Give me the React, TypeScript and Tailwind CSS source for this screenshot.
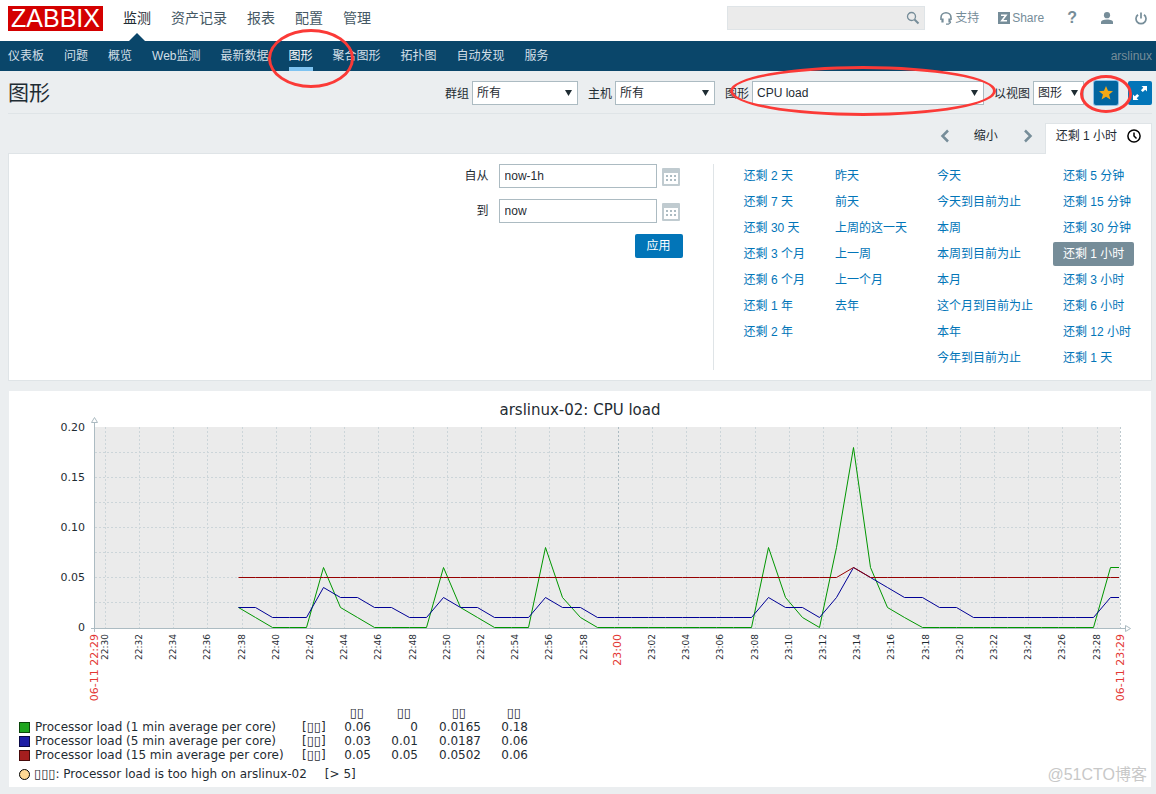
import React from 'react'

const mainMenu = ['监测', '资产记录', '报表', '配置', '管理']

const subMenu = [
  '仪表板',
  '问题',
  '概览',
  'Web监测',
  '最新数据',
  '图形',
  '聚合图形',
  '拓扑图',
  '自动发现',
  '服务'
]

const timeRanges = [
  ['还剩 2 天', '还剩 7 天', '还剩 30 天', '还剩 3 个月', '还剩 6 个月', '还剩 1 年', '还剩 2 年'],
  ['昨天', '前天', '上周的这一天', '上一周', '上一个月', '去年'],
  ['今天', '今天到目前为止', '本周', '本周到目前为止', '本月', '这个月到目前为止', '本年', '今年到目前为止'],
  ['还剩 5 分钟', '还剩 15 分钟', '还剩 30 分钟', '还剩 1 小时', '还剩 3 小时', '还剩 6 小时', '还剩 12 小时', '还剩 1 天']
]

// Load in hundredths, one sample a minute starting at 22:37:50
const load1 = [
  2, 1, 0, 0, 0, 6, 2, 1, 0, 0, 0, 0, 6, 2, 1, 0, 0, 0, 8, 3, 1, 0, 0, 0, 0, 0, 0, 0, 0, 0, 0, 8, 3, 1, 0, 8, 18, 6,
  2, 1, 0, 0, 0, 0, 0, 0, 0, 0, 0, 0, 0, 6
]
const load5 = [
  2, 2, 1, 1, 1, 4, 3, 3, 2, 2, 1, 1, 3, 2, 2, 1, 1, 1, 3, 2, 2, 1, 1, 1, 1, 1, 1, 1, 1, 1, 1, 3, 2, 2, 1, 3, 6, 5,
  4, 3, 3, 2, 2, 1, 1, 1, 1, 1, 1, 1, 1, 3
]
const load15 = load5.map((_, i) => (i === 36 ? 6 : 5))

const series = [
  { name: 'Processor load (1 min average per core)', line: '#009600', box: 'bg-[#1ea51e] border-[#0a460a]', data: load1, stats: ['0.06', '0', '0.0165', '0.18'] },
  { name: 'Processor load (5 min average per core)', line: '#000096', box: 'bg-[#1e1ea5] border-[#0a0a46]', data: load5, stats: ['0.03', '0.01', '0.0187', '0.06'] },
  { name: 'Processor load (15 min average per core)', line: '#960000', box: 'bg-[#a51e1e] border-[#460a0a]', data: load15, stats: ['0.05', '0.05', '0.0502', '0.06'] }
]

const plot = { left: 86, right: 1111, top: 36, bottom: 237 }

function linePoints(data: number[]): string {
  const points = data.map((v, i) => [Math.floor(230 + i * 17.1) - 0.5, 236.5 - v * 10])
  points.push([1110, 236.5 - data[data.length - 1] * 10])
  return points.map((p) => p.join(',')).join(' ')
}

function tickLabel(i: number): string {
  const minutes = 30 + i * 2
  return `${minutes >= 60 ? 23 : 22}:${String(minutes % 60).padStart(2, '0')}`
}

function Ring({ className }: { className: string }): React.JSX.Element {
  return (
    <span
      aria-hidden="true"
      className={`pointer-events-none absolute z-10 rounded-[50%] border-3 border-[#fb3a37] ${className}`}
    />
  )
}

interface FilterSelectProps {
  id: string
  label: string
  value: string
  className: string
  children?: React.ReactNode
}

function FilterSelect({ id, label, value, className, children }: FilterSelectProps): React.JSX.Element {
  return (
    <div className="relative flex items-center gap-[3px]">
      <label htmlFor={id} className="pt-[2px]">
        {label}
      </label>
      <div className="relative">
        <select
          id={id}
          className={`block h-6 appearance-none border border-[#acbbc2] bg-white pl-1 text-xs text-[#1f2c33] ${className}`}
        >
          <option>{value}</option>
        </select>
        <svg className="pointer-events-none absolute right-[6px] top-[9px]" width="7" height="6" viewBox="0 0 7 6">
          <path d="M0 0h7L3.5 6z" fill="#1f2c33" />
        </svg>
      </div>
      {children}
    </div>
  )
}

function CalendarIcon(): React.JSX.Element {
  return (
    <svg width="18" height="18" viewBox="0 0 18 18">
      <rect width="18" height="18" rx="1" fill="#c0cbd0" />
      <rect x="2" y="5" width="14" height="11" fill="#fff" />
      {[4, 8, 12].map((x) =>
        [7, 11].map((y) => <rect key={`${x}-${y}`} x={x} y={y} width="2" height="2" fill="#acbbc2" />)
      )}
    </svg>
  )
}

function TimeField({ id, label, value }: { id: string; label: string; value: string }): React.JSX.Element {
  return (
    <div className="flex items-center">
      <label htmlFor={id} className="mr-[10px]">
        {label}
      </label>
      <input id={id} defaultValue={value} className="h-6 w-[158px] border border-[#acbbc2] bg-white px-[5px] text-xs" />
      <button type="button" aria-label={`${label} 日历`} className="flex w-[26px] pl-[5px] pt-[2px]">
        <CalendarIcon />
      </button>
    </div>
  )
}

function LoadChart(): React.JSX.Element {
  return (
    <svg viewBox="0 0 1142 315" className="block h-auto w-full font-['DejaVu_Sans',sans-serif]" fill="#1f2c33">
      <text x="571" y="24" fontSize="15" textAnchor="middle">
        arslinux-02: CPU load
      </text>
      <rect x={plot.left} y={plot.top} width={plot.right - plot.left} height={plot.bottom - plot.top} fill="#ebebeb" />

      <g stroke="#ccd5d9" strokeDasharray="2 2" shapeRendering="crispEdges">
        {[1, 2, 3, 4, 5, 6, 7].map((i) => (
          <line key={i} x1={plot.left} x2={plot.right} y1={236.5 - i * 25} y2={236.5 - i * 25} />
        ))}
        {Array.from({ length: 30 }, (_, i) => {
          const x = Math.floor(96.3 + i * 34.2) + 0.5
          return (
            <line key={i} x1={x} x2={x} y1={plot.top} y2={plot.bottom} stroke={i === 15 ? '#acbbc2' : undefined} />
          )
        })}
        <line x1="1111.5" x2="1111.5" y1={plot.top} y2={plot.bottom} stroke="#bfcacf" />
      </g>

      <g fill="none" stroke="#acbbc2" shapeRendering="crispEdges">
        <path d="M85.5 32v209M82 237.5h1034" />
        <path d="M82.5 31.5h6l-3-5z" fill="#fff" shapeRendering="auto" />
        <path d="M1116.5 234.5v6l5-3z" fill="#fff" shapeRendering="auto" />
      </g>

      {['0', '0.05', '0.10', '0.15', '0.20'].map((label, i) => (
        <text key={label} x="76" y={240 - i * 50} fontSize="11" textAnchor="end">
          {label}
        </text>
      ))}

      {Array.from({ length: 30 }, (_, i) => {
        const hour = i === 15
        return (
          <text
            key={i}
            transform={`translate(${Math.floor(96.3 + i * 34.2) + 3} 243) rotate(-90)`}
            fontSize={hour ? 11 : 9}
            fill={hour ? '#e33734' : undefined}
            textAnchor="end"
          >
            {tickLabel(i)}
          </text>
        )
      })}
      <g fill="#e33734" fontSize="11" textAnchor="end">
        <text transform="translate(89 243) rotate(-90)">06-11 22:29</text>
        <text transform="translate(1115 243) rotate(-90)">06-11 23:29</text>
      </g>

      {series.map((s) => (
        <polyline key={s.name} points={linePoints(s.data)} fill="none" stroke={s.line} />
      ))}
    </svg>
  )
}

function Legend(): React.JSX.Element {
  return (
    <div className="px-[10px] pb-[6px] font-['DejaVu_Sans',sans-serif] text-xs leading-[14px]">
      <table className="table-fixed border-collapse text-right">
        <colgroup>
          <col className="w-4" />
          <col className="w-[267px]" />
          <col className="w-[30px]" />
          <col className="w-[39px]" />
          <col className="w-[47px]" />
          <col className="w-[63px]" />
          <col className="w-[47px]" />
        </colgroup>
        <thead>
          <tr className="text-[13px] leading-[14px]">
            <td colSpan={3} />
            {series[0].stats.map((_, i) => (
              <th key={i} className={`p-0 font-normal ${i === 2 ? 'pr-[15px]' : 'pr-[7px]'}`}>
                ▯▯
              </th>
            ))}
          </tr>
        </thead>
        <tbody>
          {series.map((s) => (
            <tr key={s.name}>
              <td className="p-0">
                <span className={`block size-[11px] border ${s.box}`} />
              </td>
              <td className="whitespace-nowrap p-0 text-left">{s.name}</td>
              <td className="p-0 text-left">
                [<span className="text-[13px] leading-3">▯▯</span>]
              </td>
              {s.stats.map((v, i) => (
                <td key={i} className="p-0">
                  {v}
                </td>
              ))}
            </tr>
          ))}
        </tbody>
      </table>
      <div className="mt-[5px] flex items-center">
        <span className="mr-1 size-[11px] rounded-full border border-black bg-[#ffd995]" />
        <span>
          <span className="text-[13px] leading-3">▯▯▯</span>: Processor load is too high on arslinux-02
        </span>
        <span className="ml-[18px]">[&gt; 5]</span>
      </div>
    </div>
  )
}

function Header(): React.JSX.Element {
  return (
    <header>
      <div className="flex h-[41px] items-start bg-white px-2 pt-[6px]">
        <a
          href="#"
          className="mr-5 flex h-[25px] w-[95px] items-center justify-center bg-[#d40000] text-[25px] leading-none text-white"
        >
          ZABBIX
        </a>
        <nav className="flex gap-5 text-sm leading-6 text-[#455864]">
          {mainMenu.map((item, i) => (
            <a key={item} href="#" className={i === 0 ? 'relative h-[35px] text-[#1f2c33]' : ''}>
              {item}
              {i === 0 && (
                <svg className="absolute bottom-0 left-[6px]" width="16" height="8" viewBox="0 0 16 8">
                  <path d="M0 8 8 0l8 8z" fill="#0a466a" />
                </svg>
              )}
            </a>
          ))}
        </nav>
        <div className="ml-auto flex h-6 items-center text-xs text-[#768d99]">
          <div className="relative mr-[15px]">
            <input aria-label="搜索" className="block h-6 w-[198px] border border-[#dfe4e7] bg-[#ebebeb] px-1" />
            <svg className="absolute right-[5px] top-[5px]" width="14" height="14" viewBox="0 0 14 14" fill="none" stroke="#768d99">
              <circle cx="5.5" cy="5.5" r="4" strokeWidth="1.3" />
              <path d="m8.5 8.5 4 4" strokeWidth="2" />
            </svg>
          </div>
          <a href="#" className="mr-[19px] flex items-center gap-[3px]">
            <svg width="12" height="13" viewBox="0 0 12 13" fill="none" stroke="#768d99" strokeWidth="1.6">
              <path d="M1 8V5.500a5 4.700 0 0 1 10 0V8" />
              <path d="M2.500 6.500v4M9.500 6.500v4" strokeWidth="2.200" />
              <path d="M10.500 9.500v1L8.500 12.200H6" strokeWidth="1.200" />
            </svg>
            支持
          </a>
          <a href="#" className="mr-[23px] flex items-center gap-[2px]">
            <svg width="12" height="12" viewBox="0 0 12 12">
              <rect width="12" height="12" fill="#768d99" />
              <path d="M3 3.200h5L3.800 8.800H9" fill="none" stroke="#fff" strokeWidth="1.600" />
            </svg>
            Share
          </a>
          <a href="#" className="mr-6 text-base font-bold">
            ?
          </a>
          <a href="#" aria-label="用户" className="mr-[22px]">
            <svg width="12" height="12" viewBox="0 0 12 12" fill="#768d99">
              <circle cx="6" cy="3.200" r="3.100" />
              <path d="M0 12v-2c0-1.500 2.500-2.500 6-2.500s6 1 6 2.500v2z" />
            </svg>
          </a>
          <a href="#" aria-label="退出" className="mr-px">
            <svg width="12" height="13" viewBox="0 0 12 13" fill="none" stroke="#768d99" strokeWidth="1.700">
              <path d="M3 2.700a5 5 0 1 0 6 0M6 .5v6" />
            </svg>
          </a>
        </div>
      </div>
      <nav className="flex h-[30px] items-center gap-5 bg-[#0a466a] pl-2 pr-1 text-xs leading-[30px] text-[#d2dfe7]">
        {subMenu.map((item) =>
          item === '图形' ? (
            <a key={item} href="#" className="relative h-[30px] border-b-4 border-[#7fc4f1] text-white">
              {item}
              <Ring className="-left-[21px] -top-[12px] h-[59px] w-[86px]" />
            </a>
          ) : (
            <a key={item} href="#">
              {item}
            </a>
          )
        )}
        <a href="#" className="ml-auto text-[#768d99]">
          arslinux
        </a>
      </nav>
    </header>
  )
}

export default function App(): React.JSX.Element {
  return (
    <div className="min-h-screen bg-[#ebeef0] pb-[7px] font-['Liberation_Sans','Noto_Sans_CJK_SC',sans-serif] text-xs text-[#1f2c33]">
      <Header />
      <main className="ml-2 mr-1">
        <div className="flex h-[43px] items-center border-b border-[#dfe4e7] pt-[2px]">
          <h1 className="text-[21px] leading-6">图形</h1>
          <form className="ml-auto flex items-center gap-[10px]">
            <FilterSelect id="group" label="群组" value="所有" className="w-[106px]" />
            <FilterSelect id="host" label="主机" value="所有" className="w-[100px]" />
            <FilterSelect id="graph" label="图形" value="CPU load" className="w-[232px]">
              <Ring className="-top-[15px] left-[5px] h-[50px] w-[266px]" />
            </FilterSelect>
            <FilterSelect id="view" label="以视图" value="图形" className="w-[51px]" />
            <div className="relative">
              <button
                type="button"
                aria-label="收藏"
                className="flex size-6 items-center justify-center rounded-xs bg-[#02659f] ring-1 ring-[#8fc0e6]"
              >
                <svg width="14" height="14" viewBox="0 0 14 14">
                  <path d="m7 0 2 4.800 5 .4-3.900 3.300 1.300 5L7 10.800l-4.400 2.700 1.300-5L0 5.200l5-.4z" fill="#f4a916" />
                </svg>
              </button>
              <Ring className="-left-[14px] -top-[6px] h-[38px] w-[52px]" />
            </div>
            <button
              type="button"
              aria-label="全屏"
              className="flex size-6 items-center justify-center rounded-xs bg-[#0275b8]"
            >
              <svg width="14" height="14" viewBox="0 0 14 14" fill="#fff">
                <path d="M8.500 0H14v5.500l-1.800-1.800-2.400 2.400-1.900-1.900 2.400-2.400zM0 14V8.500l1.800 1.800 2.400-2.400 1.900 1.900-2.400 2.400L5.500 14z" />
              </svg>
            </button>
          </form>
        </div>

        <div className="flex h-[39px] items-end justify-end">
          <div className="flex h-[35px] items-center">
            <button type="button" aria-label="向前">
              <svg width="10" height="14" viewBox="0 0 10 14" fill="none" stroke="#768d99" strokeWidth="2.500">
                <path d="M8 1.500 2.500 7 8 12.500" />
              </svg>
            </button>
            <button type="button" className="ml-6 mr-[25px]">
              缩小
            </button>
            <button type="button" aria-label="向后">
              <svg width="10" height="14" viewBox="0 0 10 14" fill="none" stroke="#768d99" strokeWidth="2.500">
                <path d="M2 1.500 7.500 7 2 12.500" />
              </svg>
            </button>
          </div>
          <button
            type="button"
            className="relative -mb-px ml-3 flex h-[31px] items-center gap-[10px] border border-b-0 border-[#dfe4e7] bg-white pb-[6px] pl-[10px] pr-[10px]"
          >
            还剩 1 小时
            <svg width="14" height="14" viewBox="0 0 14 14" fill="none" stroke="#000" strokeWidth="1.500">
              <circle cx="7" cy="7" r="6.100" />
              <path d="M7 3.500V7l2.500 2.500" />
            </svg>
          </button>
        </div>

        <section className="flex border border-[#dfe4e7] bg-white p-[10px]">
          <form className="flex flex-1 flex-col items-end gap-[11px] pr-[30px]">
            <TimeField id="from" label="自从" value="now-1h" />
            <TimeField id="to" label="到" value="now" />
            <button type="button" className="h-6 w-12 rounded-xs bg-[#0275b8] text-white">
              应用
            </button>
          </form>
          <div className="flex gap-[10px] border-l border-[#dfe4e7] pl-5">
            {timeRanges.map((column, i) => (
              <ul key={i} className="flex flex-col items-start gap-[2px]">
                {column.map((range) => (
                  <li key={range}>
                    <a
                      href="#"
                      className={`block whitespace-nowrap rounded-xs px-[10px] leading-6 ${
                        range === '还剩 1 小时' ? 'bg-[#768d99] text-white' : 'text-[#0275b8]'
                      }`}
                    >
                      {range}
                    </a>
                  </li>
                ))}
              </ul>
            ))}
          </div>
        </section>

        <section className="relative mt-[10px] border-x border-[#ebeef0] bg-white">
          <LoadChart />
          <Legend />
          <span className="absolute bottom-0 right-1 text-base leading-6 text-[#c8c8c8]">@51CTO博客</span>
        </section>
      </main>
    </div>
  )
}
